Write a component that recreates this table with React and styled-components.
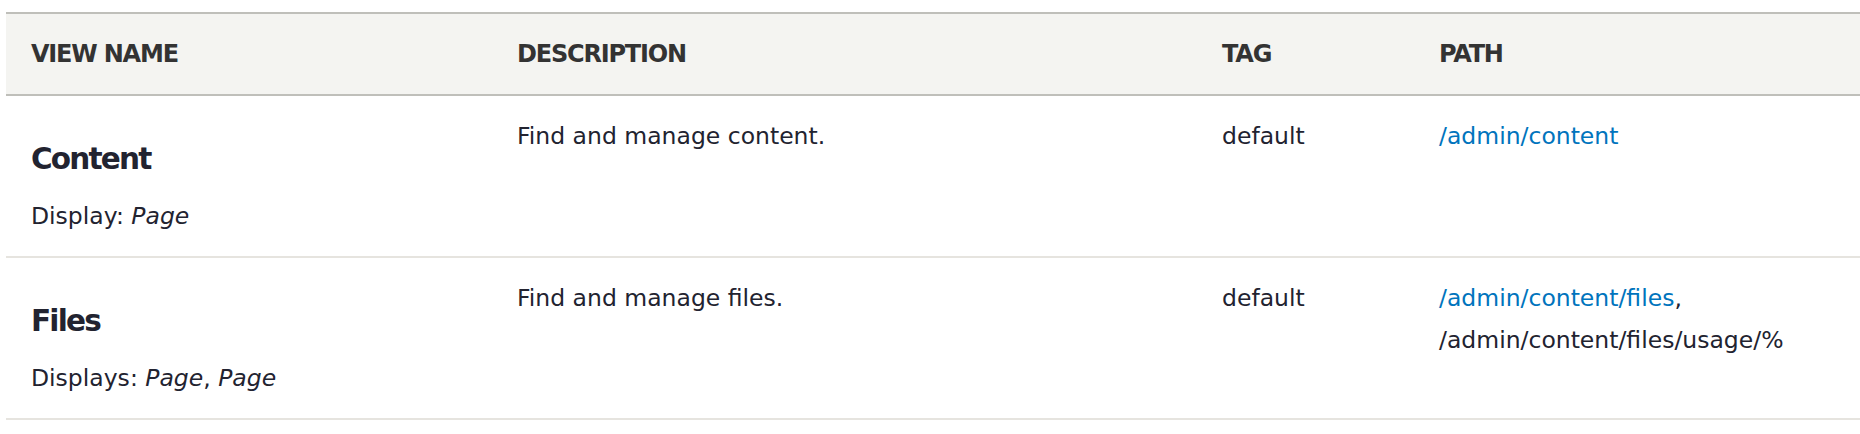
import styled, { createGlobalStyle } from "styled-components";

const GlobalStyle = createGlobalStyle`
  body {
    margin: 0;
    background: #fff;
    font-family: 'DejaVu Sans', 'Liberation Sans', sans-serif;
    color: #222330;
  }
`;

const Wrapper = styled.div`
  padding: 12px 0 0 6px;
`;

const Table = styled.table`
  width: 100%;
  table-layout: fixed;
  border-collapse: separate;
  border-spacing: 0;
`;

const HeadCell = styled.th`
  text-align: left;
  background: #f4f4f1;
  border-top: 2px solid #bfbfba;
  border-bottom: 2px solid #bfbfba;
  padding: 26px 0 26px ${(p) => (p.$first ? "25px" : "26px")};
  font-size: 24px;
  line-height: 28px;
  font-weight: 700;
  letter-spacing: -1.2px;
  text-transform: uppercase;
  color: #333;
`;

const Cell = styled.td`
  vertical-align: top;
  border-bottom: 2px solid #e6e4df;
  padding: 19px 0 0 26px;
  font-size: 23.5px;
  line-height: 42px;
`;

const NameCell = styled(Cell)`
  padding-left: 25px;
  padding-bottom: 19px;
`;

const ViewTitle = styled.h2`
  margin: 27px 0 19px;
  font-size: 29.5px;
  line-height: 34px;
  font-weight: 700;
  letter-spacing: -1.8px;
  color: #222330;
`;

const Displays = styled.div`
  line-height: 42px;
`;

const Em = styled.em`
  font-style: italic;
`;

const PathLink = styled.a`
  color: #0074bd;
  text-decoration: none;
`;

const columns = [
  { label: "View name", width: 485 },
  { label: "Description", width: 705 },
  { label: "Tag", width: 217 },
  { label: "Path", width: 447 },
];

const views = [
  {
    name: "Content",
    displayLabel: "Display",
    displays: ["Page"],
    description: "Find and manage content.",
    tag: "default",
    paths: [{ href: "/admin/content", link: true }],
  },
  {
    name: "Files",
    displayLabel: "Displays",
    displays: ["Page", "Page"],
    description: "Find and manage files.",
    tag: "default",
    paths: [
      { href: "/admin/content/files", link: true },
      { href: "/admin/content/files/usage/%", link: false },
    ],
  },
];

export default function App() {
  return (
    <>
      <GlobalStyle />
      <Wrapper>
        <Table>
          <colgroup>
            {columns.map((c) => (
              <col key={c.label} style={{ width: c.width }} />
            ))}
          </colgroup>
          <thead>
            <tr>
              {columns.map((c, i) => (
                <HeadCell key={c.label} $first={i === 0}>
                  {c.label}
                </HeadCell>
              ))}
            </tr>
          </thead>
          <tbody>
            {views.map((v) => (
              <tr key={v.name}>
                <NameCell>
                  <ViewTitle>{v.name}</ViewTitle>
                  <Displays>
                    {v.displayLabel}:{" "}
                    {v.displays.map((d, i) => (
                      <span key={i}>
                        {i > 0 && ", "}
                        <Em>{d}</Em>
                      </span>
                    ))}
                  </Displays>
                </NameCell>
                <Cell>{v.description}</Cell>
                <Cell>{v.tag}</Cell>
                <Cell>
                  {v.paths.map((p, i) => (
                    <span key={p.href}>
                      {i > 0 && ", "}
                      {p.link ? (
                        <PathLink href="#">{p.href}</PathLink>
                      ) : (
                        p.href
                      )}
                    </span>
                  ))}
                </Cell>
              </tr>
            ))}
          </tbody>
        </Table>
      </Wrapper>
    </>
  );
}
